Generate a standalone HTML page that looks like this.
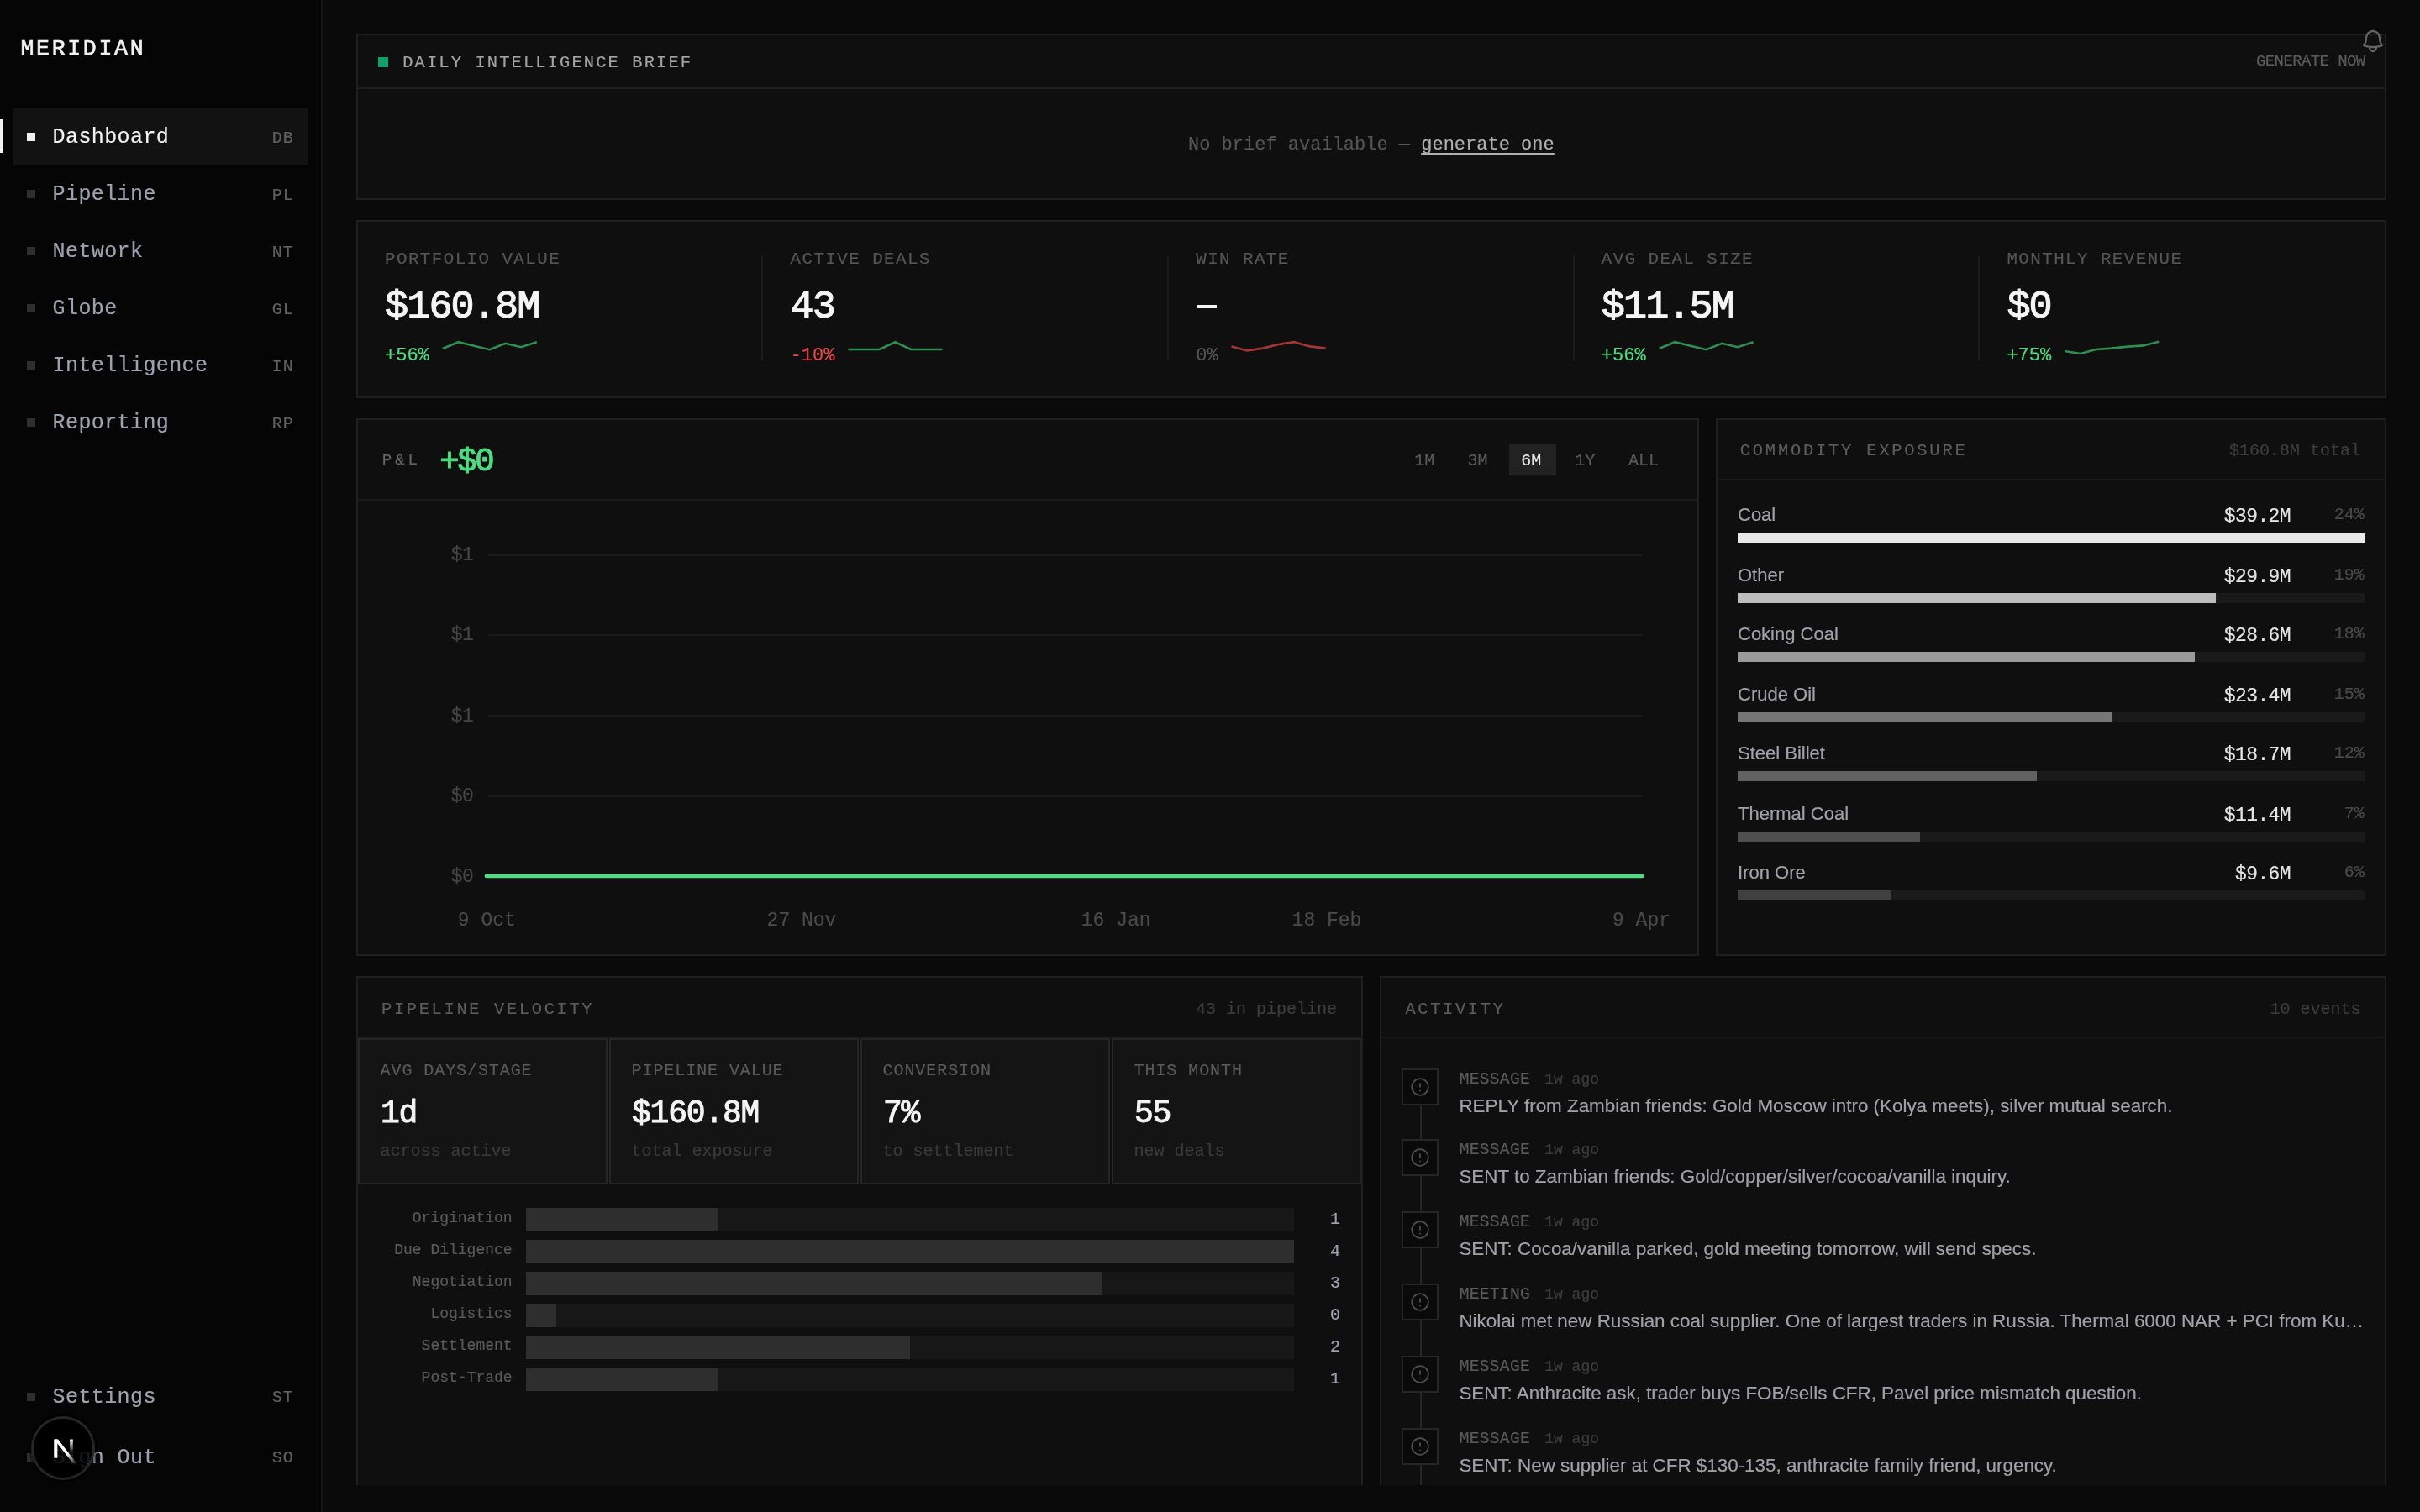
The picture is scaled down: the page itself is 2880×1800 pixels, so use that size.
<!DOCTYPE html>
<html><head><meta charset="utf-8"><title>Meridian</title>
<style>
html,body{margin:0;padding:0;background:#0a0a0a;overflow:hidden;-webkit-font-smoothing:antialiased}
body{width:1440px;height:900px;position:relative}
@media (min-width:2000px){html{zoom:2}}
.t{position:absolute;white-space:pre;-webkit-text-stroke:0.1px currentColor}
.r{position:absolute}
.clip{position:absolute;left:0;top:0;width:1440px;height:884px;overflow:hidden}
</style></head><body><div id="w" style="position:absolute;left:0;top:0;width:1440px;height:900px;will-change:transform;background:#0a0a0a">
<div class="r" style="left:0px;top:0px;width:191px;height:900px;background:#050505;"></div>
<div class="r" style="left:191px;top:0px;width:1px;height:900px;background:#151515;"></div>
<div class="t" style="top:21.58px;font:400 13.3px/15.96px 'Liberation Mono', monospace;color:#f2f2f2;letter-spacing:1.33px;left:12.20px;-webkit-text-stroke:0.3px #f2f2f2;">MERIDIAN</div>
<div class="r" style="left:0px;top:71px;width:2px;height:20px;background:#f0f0f0;"></div>
<div class="r" style="left:8px;top:64px;width:175px;height:34px;background:#121212;"></div>
<div class="r" style="left:16px;top:79px;width:5px;height:5px;background:#f0f0f0;"></div>
<div class="t" style="top:74.47px;font:400 12.5px/15.0px 'Liberation Mono', monospace;color:#f2f2f2;letter-spacing:0.2px;left:31.30px;">Dashboard</div>
<div class="t" style="top:76.64px;font:400 10px/12.0px 'Liberation Mono', monospace;color:#606060;letter-spacing:0.5px;right:1265.10px;text-align:right;">DB</div>
<div class="r" style="left:16px;top:113px;width:5px;height:5px;background:#2e2e2e;"></div>
<div class="t" style="top:108.47px;font:400 12.5px/15.0px 'Liberation Mono', monospace;color:#9ca3af;letter-spacing:0.2px;left:31.30px;">Pipeline</div>
<div class="t" style="top:110.64px;font:400 10px/12.0px 'Liberation Mono', monospace;color:#606060;letter-spacing:0.5px;right:1265.10px;text-align:right;">PL</div>
<div class="r" style="left:16px;top:147px;width:5px;height:5px;background:#2e2e2e;"></div>
<div class="t" style="top:142.47px;font:400 12.5px/15.0px 'Liberation Mono', monospace;color:#9ca3af;letter-spacing:0.2px;left:31.30px;">Network</div>
<div class="t" style="top:144.64px;font:400 10px/12.0px 'Liberation Mono', monospace;color:#606060;letter-spacing:0.5px;right:1265.10px;text-align:right;">NT</div>
<div class="r" style="left:16px;top:181px;width:5px;height:5px;background:#2e2e2e;"></div>
<div class="t" style="top:176.47px;font:400 12.5px/15.0px 'Liberation Mono', monospace;color:#9ca3af;letter-spacing:0.2px;left:31.30px;">Globe</div>
<div class="t" style="top:178.64px;font:400 10px/12.0px 'Liberation Mono', monospace;color:#606060;letter-spacing:0.5px;right:1265.10px;text-align:right;">GL</div>
<div class="r" style="left:16px;top:215px;width:5px;height:5px;background:#2e2e2e;"></div>
<div class="t" style="top:210.47px;font:400 12.5px/15.0px 'Liberation Mono', monospace;color:#9ca3af;letter-spacing:0.2px;left:31.30px;">Intelligence</div>
<div class="t" style="top:212.64px;font:400 10px/12.0px 'Liberation Mono', monospace;color:#606060;letter-spacing:0.5px;right:1265.10px;text-align:right;">IN</div>
<div class="r" style="left:16px;top:249px;width:5px;height:5px;background:#2e2e2e;"></div>
<div class="t" style="top:244.47px;font:400 12.5px/15.0px 'Liberation Mono', monospace;color:#9ca3af;letter-spacing:0.2px;left:31.30px;">Reporting</div>
<div class="t" style="top:246.64px;font:400 10px/12.0px 'Liberation Mono', monospace;color:#606060;letter-spacing:0.5px;right:1265.10px;text-align:right;">RP</div>
<div class="r" style="left:16px;top:829px;width:5px;height:5px;background:#2e2e2e;"></div>
<div class="t" style="top:824.67px;font:400 12.5px/15.0px 'Liberation Mono', monospace;color:#9ca3af;letter-spacing:0.2px;left:31.30px;">Settings</div>
<div class="t" style="top:826.24px;font:400 10px/12.0px 'Liberation Mono', monospace;color:#606060;letter-spacing:0.5px;right:1265.10px;text-align:right;">ST</div>
<div class="r" style="left:16px;top:865px;width:5px;height:5px;background:#2e2e2e;"></div>
<div class="t" style="top:860.57px;font:400 12.5px/15.0px 'Liberation Mono', monospace;color:#9ca3af;letter-spacing:0.2px;left:31.30px;">Sign Out</div>
<div class="t" style="top:862.14px;font:400 10px/12.0px 'Liberation Mono', monospace;color:#606060;letter-spacing:0.5px;right:1265.10px;text-align:right;">SO</div>
<div class="r" style="left:192px;top:0px;width:1248px;height:900px;background:#0a0a0a;"></div>
<div class="clip">
<div class="r" style="left:212px;top:20px;width:1208px;height:99px;background:#0f0f0f;box-shadow:inset 0 0 0 1px #1f1f1f;"></div>
<div class="r" style="left:213px;top:52px;width:1206px;height:1px;background:#1f1f1f;"></div>
<div class="r" style="left:225px;top:34px;width:6px;height:6px;background:#12a06d;"></div>
<div class="t" style="top:31.52px;font:400 10.2px/12.24px 'Liberation Mono', monospace;color:#a3a3a3;letter-spacing:1.07px;left:239.60px;">DAILY INTELLIGENCE BRIEF</div>
<div class="t" style="top:30.87px;font:400 9.5px/11.4px 'Liberation Mono', monospace;color:#5c5c5c;letter-spacing:-0.3px;right:32.70px;text-align:right;">GENERATE NOW</div>
<div class="t" style="top:79.77px;font:400 11px/13.2px 'Liberation Mono', monospace;color:#555555;left:707.00px;">No brief available — <span style="color:#b0b0b0;text-decoration:underline;text-underline-offset:2px;text-decoration-skip-ink:none">generate one</span></div>
<div class="r" style="left:212px;top:131px;width:1208px;height:106px;background:#0f0f0f;box-shadow:inset 0 0 0 1px #1f1f1f;"></div>
<div class="t" style="top:148.39px;font:400 10.4px/12.48px 'Liberation Mono', monospace;color:#555555;letter-spacing:0.73px;left:229.00px;">PORTFOLIO VALUE</div>
<div class="t" style="top:169.03px;font:400 23.4px/28.08px 'Liberation Mono', monospace;color:#f5f5f5;letter-spacing:-0.94px;left:229.00px;-webkit-text-stroke:0.55px #f5f5f5;">$160.8M</div>
<div class="t" style="top:205.27px;font:400 11px/13.2px 'Liberation Mono', monospace;color:#4ade80;left:229.00px;">+56%</div>
<svg class="r" style="left:0;top:0" width="1440" height="240"><polyline points="263.40,207.50 272.73,203.60 282.07,205.85 291.40,208.10 300.73,204.40 310.07,206.60 319.40,203.60" fill="none" stroke="#2f8f52" stroke-width="1.3" stroke-linejoin="miter"/></svg>
<div class="r" style="left:453.2px;top:152px;width:1px;height:63px;background:#1c1c1c;"></div>
<div class="t" style="top:148.39px;font:400 10.4px/12.48px 'Liberation Mono', monospace;color:#555555;letter-spacing:0.73px;left:470.30px;">ACTIVE DEALS</div>
<div class="t" style="top:169.03px;font:400 23.4px/28.08px 'Liberation Mono', monospace;color:#f5f5f5;letter-spacing:-0.94px;left:470.30px;-webkit-text-stroke:0.55px #f5f5f5;">43</div>
<div class="t" style="top:205.27px;font:400 11px/13.2px 'Liberation Mono', monospace;color:#ef4444;left:470.30px;">-10%</div>
<svg class="r" style="left:0;top:0" width="1440" height="240"><polyline points="504.70,208.00 514.03,208.00 523.37,208.00 532.70,203.60 542.03,208.00 551.37,208.00 560.70,208.00" fill="none" stroke="#2f8f52" stroke-width="1.3" stroke-linejoin="miter"/></svg>
<div class="r" style="left:694.5px;top:152px;width:1px;height:63px;background:#1c1c1c;"></div>
<div class="t" style="top:148.39px;font:400 10.4px/12.48px 'Liberation Mono', monospace;color:#555555;letter-spacing:0.73px;left:711.60px;">WIN RATE</div>
<div class="r" style="left:711.9px;top:181.55px;width:12.15px;height:2.2px;background:#f5f5f5;"></div>
<div class="t" style="top:205.27px;font:400 11px/13.2px 'Liberation Mono', monospace;color:#555555;left:711.60px;">0%</div>
<svg class="r" style="left:0;top:0" width="1440" height="240"><polyline points="732.80,206.30 742.13,208.70 751.47,207.30 760.80,205.00 770.13,203.60 779.47,206.20 788.80,207.30" fill="none" stroke="#a33636" stroke-width="1.3" stroke-linejoin="miter"/></svg>
<div class="r" style="left:935.8px;top:152px;width:1px;height:63px;background:#1c1c1c;"></div>
<div class="t" style="top:148.39px;font:400 10.4px/12.48px 'Liberation Mono', monospace;color:#555555;letter-spacing:0.73px;left:952.90px;">AVG DEAL SIZE</div>
<div class="t" style="top:169.03px;font:400 23.4px/28.08px 'Liberation Mono', monospace;color:#f5f5f5;letter-spacing:-0.94px;left:952.90px;-webkit-text-stroke:0.55px #f5f5f5;">$11.5M</div>
<div class="t" style="top:205.27px;font:400 11px/13.2px 'Liberation Mono', monospace;color:#4ade80;left:952.90px;">+56%</div>
<svg class="r" style="left:0;top:0" width="1440" height="240"><polyline points="987.30,207.50 996.63,203.60 1005.97,205.85 1015.30,208.10 1024.63,204.40 1033.97,206.60 1043.30,203.60" fill="none" stroke="#2f8f52" stroke-width="1.3" stroke-linejoin="miter"/></svg>
<div class="r" style="left:1177.1px;top:152px;width:1px;height:63px;background:#1c1c1c;"></div>
<div class="t" style="top:148.39px;font:400 10.4px/12.48px 'Liberation Mono', monospace;color:#555555;letter-spacing:0.73px;left:1194.20px;">MONTHLY REVENUE</div>
<div class="t" style="top:169.03px;font:400 23.4px/28.08px 'Liberation Mono', monospace;color:#f5f5f5;letter-spacing:-0.94px;left:1194.20px;-webkit-text-stroke:0.55px #f5f5f5;">$0</div>
<div class="t" style="top:205.27px;font:400 11px/13.2px 'Liberation Mono', monospace;color:#4ade80;left:1194.20px;">+75%</div>
<svg class="r" style="left:0;top:0" width="1440" height="240"><polyline points="1228.60,209.00 1237.93,210.50 1247.27,208.00 1256.60,207.30 1265.93,206.30 1275.27,205.70 1284.60,203.40" fill="none" stroke="#2f8f52" stroke-width="1.3" stroke-linejoin="miter"/></svg>
<div class="r" style="left:212px;top:249px;width:799px;height:320px;background:#0f0f0f;box-shadow:inset 0 0 0 1px #1f1f1f;"></div>
<div class="r" style="left:213px;top:297px;width:797px;height:1px;background:#1a1a1a;"></div>
<div class="t" style="top:268.57px;font:400 9.5px/11.4px 'Liberation Mono', monospace;color:#666666;letter-spacing:2.0px;left:227.40px;">P&amp;L</div>
<div class="t" style="top:263.51px;font:400 19.5px/23.4px 'Liberation Mono', monospace;color:#4ade80;letter-spacing:-1.2px;left:261.60px;-webkit-text-stroke:0.5px #4ade80;">+$0</div>
<div class="r" style="left:898px;top:264px;width:28px;height:19.1px;background:#222222;"></div>
<div class="t" style="top:268.64px;font:400 10px/12.0px 'Liberation Mono', monospace;color:#5a5a5a;left:841.60px;">1M</div>
<div class="t" style="top:268.64px;font:400 10px/12.0px 'Liberation Mono', monospace;color:#5a5a5a;left:873.30px;">3M</div>
<div class="t" style="top:268.64px;font:400 10px/12.0px 'Liberation Mono', monospace;color:#e8e8e8;left:905.10px;">6M</div>
<div class="t" style="top:268.64px;font:400 10px/12.0px 'Liberation Mono', monospace;color:#5a5a5a;left:937.10px;">1Y</div>
<div class="t" style="top:268.64px;font:400 10px/12.0px 'Liberation Mono', monospace;color:#5a5a5a;left:969.00px;">ALL</div>
<div class="r" style="left:290px;top:329.8px;width:687px;height:1px;background:#1a1a1a;"></div>
<div class="t" style="top:324.04px;font:400 11.5px/13.8px 'Liberation Mono', monospace;color:#454545;letter-spacing:-0.35px;right:1158.50px;text-align:right;">$1</div>
<div class="r" style="left:290px;top:377.4px;width:687px;height:1px;background:#1a1a1a;"></div>
<div class="t" style="top:371.64px;font:400 11.5px/13.8px 'Liberation Mono', monospace;color:#454545;letter-spacing:-0.35px;right:1158.50px;text-align:right;">$1</div>
<div class="r" style="left:290px;top:425.6px;width:687px;height:1px;background:#1a1a1a;"></div>
<div class="t" style="top:419.84px;font:400 11.5px/13.8px 'Liberation Mono', monospace;color:#454545;letter-spacing:-0.35px;right:1158.50px;text-align:right;">$1</div>
<div class="r" style="left:290px;top:473.5px;width:687px;height:1px;background:#1a1a1a;"></div>
<div class="t" style="top:467.74px;font:400 11.5px/13.8px 'Liberation Mono', monospace;color:#454545;letter-spacing:-0.35px;right:1158.50px;text-align:right;">$0</div>
<div class="r" style="left:290px;top:521.3px;width:687px;height:1px;background:#1a1a1a;"></div>
<div class="t" style="top:515.54px;font:400 11.5px/13.8px 'Liberation Mono', monospace;color:#454545;letter-spacing:-0.35px;right:1158.50px;text-align:right;">$0</div>
<div class="t" style="top:541.34px;font:400 11.5px/13.8px 'Liberation Mono', monospace;color:#4a4a4a;left:272.40px;">9 Oct</div>
<div class="t" style="top:541.34px;font:400 11.5px/13.8px 'Liberation Mono', monospace;color:#4a4a4a;left:456.30px;">27 Nov</div>
<div class="t" style="top:541.34px;font:400 11.5px/13.8px 'Liberation Mono', monospace;color:#4a4a4a;left:643.40px;">16 Jan</div>
<div class="t" style="top:541.34px;font:400 11.5px/13.8px 'Liberation Mono', monospace;color:#4a4a4a;left:768.80px;">18 Feb</div>
<div class="t" style="top:541.34px;font:400 11.5px/13.8px 'Liberation Mono', monospace;color:#4a4a4a;left:959.50px;">9 Apr</div>
<svg class="r" style="left:0;top:0" width="1440" height="600"><line x1="289.4" y1="521.5" x2="977.2" y2="521.5" stroke="#4ade80" stroke-width="2.2" stroke-linecap="round"/></svg>
<div class="r" style="left:1021px;top:249px;width:399px;height:320px;background:#0f0f0f;box-shadow:inset 0 0 0 1px #1f1f1f;"></div>
<div class="r" style="left:1022px;top:285px;width:397px;height:1px;background:#1a1a1a;"></div>
<div class="t" style="top:262.67px;font:400 10.2px/12.24px 'Liberation Mono', monospace;color:#5c5c5c;letter-spacing:1.4px;left:1035.40px;">COMMODITY EXPOSURE</div>
<div class="t" style="top:262.54px;font:400 10px/12.0px 'Liberation Mono', monospace;color:#3d3d3d;right:35.50px;text-align:right;">$160.8M total</div>
<div class="t" style="top:299.79px;font:400 11.0px/13.2px 'Liberation Sans', sans-serif;color:#a1a1aa;left:1034.00px;">Coal</div>
<div class="t" style="top:300.84px;font:400 11.5px/13.8px 'Liberation Mono', monospace;color:#e5e5e5;letter-spacing:-0.3px;right:77.00px;text-align:right;">$39.2M</div>
<div class="t" style="top:300.54px;font:400 10px/12.0px 'Liberation Mono', monospace;color:#4a4a4a;right:33.15px;text-align:right;">24%</div>
<div class="r" style="left:1034px;top:317px;width:373px;height:6px;background:#1a1a1a;"></div>
<div class="r" style="left:1034px;top:317px;width:373.0px;height:6px;background:#e8e8e8;"></div>
<div class="t" style="top:335.79px;font:400 11.0px/13.2px 'Liberation Sans', sans-serif;color:#a1a1aa;left:1034.00px;">Other</div>
<div class="t" style="top:336.84px;font:400 11.5px/13.8px 'Liberation Mono', monospace;color:#e5e5e5;letter-spacing:-0.3px;right:77.00px;text-align:right;">$29.9M</div>
<div class="t" style="top:336.54px;font:400 10px/12.0px 'Liberation Mono', monospace;color:#4a4a4a;right:33.15px;text-align:right;">19%</div>
<div class="r" style="left:1034px;top:353px;width:373px;height:6px;background:#1a1a1a;"></div>
<div class="r" style="left:1034px;top:353px;width:284.51px;height:6px;background:#bdbdbd;"></div>
<div class="t" style="top:370.79px;font:400 11.0px/13.2px 'Liberation Sans', sans-serif;color:#a1a1aa;left:1034.00px;">Coking Coal</div>
<div class="t" style="top:371.84px;font:400 11.5px/13.8px 'Liberation Mono', monospace;color:#e5e5e5;letter-spacing:-0.3px;right:77.00px;text-align:right;">$28.6M</div>
<div class="t" style="top:371.54px;font:400 10px/12.0px 'Liberation Mono', monospace;color:#4a4a4a;right:33.15px;text-align:right;">18%</div>
<div class="r" style="left:1034px;top:388px;width:373px;height:6px;background:#1a1a1a;"></div>
<div class="r" style="left:1034px;top:388px;width:272.14px;height:6px;background:#9a9a9a;"></div>
<div class="t" style="top:406.79px;font:400 11.0px/13.2px 'Liberation Sans', sans-serif;color:#a1a1aa;left:1034.00px;">Crude Oil</div>
<div class="t" style="top:407.84px;font:400 11.5px/13.8px 'Liberation Mono', monospace;color:#e5e5e5;letter-spacing:-0.3px;right:77.00px;text-align:right;">$23.4M</div>
<div class="t" style="top:407.54px;font:400 10px/12.0px 'Liberation Mono', monospace;color:#4a4a4a;right:33.15px;text-align:right;">15%</div>
<div class="r" style="left:1034px;top:424px;width:373px;height:6px;background:#1a1a1a;"></div>
<div class="r" style="left:1034px;top:424px;width:222.66px;height:6px;background:#777777;"></div>
<div class="t" style="top:441.79px;font:400 11.0px/13.2px 'Liberation Sans', sans-serif;color:#a1a1aa;left:1034.00px;">Steel Billet</div>
<div class="t" style="top:442.84px;font:400 11.5px/13.8px 'Liberation Mono', monospace;color:#e5e5e5;letter-spacing:-0.3px;right:77.00px;text-align:right;">$18.7M</div>
<div class="t" style="top:442.54px;font:400 10px/12.0px 'Liberation Mono', monospace;color:#4a4a4a;right:33.15px;text-align:right;">12%</div>
<div class="r" style="left:1034px;top:459px;width:373px;height:6px;background:#1a1a1a;"></div>
<div class="r" style="left:1034px;top:459px;width:177.94px;height:6px;background:#626262;"></div>
<div class="t" style="top:477.79px;font:400 11.0px/13.2px 'Liberation Sans', sans-serif;color:#a1a1aa;left:1034.00px;">Thermal Coal</div>
<div class="t" style="top:478.84px;font:400 11.5px/13.8px 'Liberation Mono', monospace;color:#e5e5e5;letter-spacing:-0.3px;right:77.00px;text-align:right;">$11.4M</div>
<div class="t" style="top:478.54px;font:400 10px/12.0px 'Liberation Mono', monospace;color:#4a4a4a;right:33.15px;text-align:right;">7%</div>
<div class="r" style="left:1034px;top:495px;width:373px;height:6px;background:#1a1a1a;"></div>
<div class="r" style="left:1034px;top:495px;width:108.47px;height:6px;background:#4f4f4f;"></div>
<div class="t" style="top:512.79px;font:400 11.0px/13.2px 'Liberation Sans', sans-serif;color:#a1a1aa;left:1034.00px;">Iron Ore</div>
<div class="t" style="top:513.84px;font:400 11.5px/13.8px 'Liberation Mono', monospace;color:#e5e5e5;letter-spacing:-0.3px;right:77.00px;text-align:right;">$9.6M</div>
<div class="t" style="top:513.54px;font:400 10px/12.0px 'Liberation Mono', monospace;color:#4a4a4a;right:33.15px;text-align:right;">6%</div>
<div class="r" style="left:1034px;top:530px;width:373px;height:6px;background:#1a1a1a;"></div>
<div class="r" style="left:1034px;top:530px;width:91.35px;height:6px;background:#404040;"></div>
<div class="r" style="left:212px;top:581px;width:599px;height:400px;background:#0f0f0f;box-shadow:inset 0 0 0 1px #1f1f1f;"></div>
<div class="r" style="left:213px;top:617px;width:597px;height:1px;background:#1c1c1c;"></div>
<div class="t" style="top:594.77px;font:400 10.2px/12.24px 'Liberation Mono', monospace;color:#5c5c5c;letter-spacing:1.33px;left:227.00px;">PIPELINE VELOCITY</div>
<div class="t" style="top:594.84px;font:400 10px/12.0px 'Liberation Mono', monospace;color:#3d3d3d;right:644.50px;text-align:right;">43 in pipeline</div>
<div class="r" style="left:213.0px;top:618px;width:148.5px;height:87px;background:#141414;box-shadow:inset 0 0 0 1px #262626;"></div>
<div class="t" style="top:631.54px;font:400 10px/12.0px 'Liberation Mono', monospace;color:#5a5a5a;letter-spacing:0.46px;left:226.30px;">AVG DAYS/STAGE</div>
<div class="t" style="top:651.74px;font:400 19px/22.8px 'Liberation Mono', monospace;color:#f5f5f5;letter-spacing:-0.6px;left:226.50px;-webkit-text-stroke:0.5px #f5f5f5;">1d</div>
<div class="t" style="top:679.34px;font:400 10px/12.0px 'Liberation Mono', monospace;color:#3a3a3a;left:226.30px;">across active</div>
<div class="r" style="left:362.5px;top:618px;width:148.5px;height:87px;background:#141414;box-shadow:inset 0 0 0 1px #262626;"></div>
<div class="t" style="top:631.54px;font:400 10px/12.0px 'Liberation Mono', monospace;color:#5a5a5a;letter-spacing:0.46px;left:375.80px;">PIPELINE VALUE</div>
<div class="t" style="top:651.74px;font:400 19px/22.8px 'Liberation Mono', monospace;color:#f5f5f5;letter-spacing:-0.6px;left:376.00px;-webkit-text-stroke:0.5px #f5f5f5;">$160.8M</div>
<div class="t" style="top:679.34px;font:400 10px/12.0px 'Liberation Mono', monospace;color:#3a3a3a;left:375.80px;">total exposure</div>
<div class="r" style="left:512.0px;top:618px;width:148.5px;height:87px;background:#141414;box-shadow:inset 0 0 0 1px #262626;"></div>
<div class="t" style="top:631.54px;font:400 10px/12.0px 'Liberation Mono', monospace;color:#5a5a5a;letter-spacing:0.46px;left:525.30px;">CONVERSION</div>
<div class="t" style="top:651.74px;font:400 19px/22.8px 'Liberation Mono', monospace;color:#f5f5f5;letter-spacing:-0.6px;left:525.50px;-webkit-text-stroke:0.5px #f5f5f5;">7%</div>
<div class="t" style="top:679.34px;font:400 10px/12.0px 'Liberation Mono', monospace;color:#3a3a3a;left:525.30px;">to settlement</div>
<div class="r" style="left:661.5px;top:618px;width:148.5px;height:87px;background:#141414;box-shadow:inset 0 0 0 1px #262626;"></div>
<div class="t" style="top:631.54px;font:400 10px/12.0px 'Liberation Mono', monospace;color:#5a5a5a;letter-spacing:0.46px;left:674.80px;">THIS MONTH</div>
<div class="t" style="top:651.74px;font:400 19px/22.8px 'Liberation Mono', monospace;color:#f5f5f5;letter-spacing:-0.6px;left:675.00px;-webkit-text-stroke:0.5px #f5f5f5;">55</div>
<div class="t" style="top:679.34px;font:400 10px/12.0px 'Liberation Mono', monospace;color:#3a3a3a;left:674.80px;">new deals</div>
<div class="t" style="top:720.21px;font:400 9px/10.8px 'Liberation Mono', monospace;color:#5a5a5a;right:1135.20px;text-align:right;">Origination</div>
<div class="r" style="left:313px;top:719.1px;width:457px;height:14px;background:#171717;"></div>
<div class="r" style="left:313px;top:719.1px;width:114.25px;height:14px;background:#2e2e2e;"></div>
<div class="t" style="top:720.09px;font:400 10px/12.0px 'Liberation Mono', monospace;color:#9ca3af;right:642.50px;text-align:right;">1</div>
<div class="t" style="top:739.21px;font:400 9px/10.8px 'Liberation Mono', monospace;color:#5a5a5a;right:1135.20px;text-align:right;">Due Diligence</div>
<div class="r" style="left:313px;top:738.1px;width:457px;height:14px;background:#171717;"></div>
<div class="r" style="left:313px;top:738.1px;width:457.0px;height:14px;background:#2e2e2e;"></div>
<div class="t" style="top:739.09px;font:400 10px/12.0px 'Liberation Mono', monospace;color:#9ca3af;right:642.50px;text-align:right;">4</div>
<div class="t" style="top:758.21px;font:400 9px/10.8px 'Liberation Mono', monospace;color:#5a5a5a;right:1135.20px;text-align:right;">Negotiation</div>
<div class="r" style="left:313px;top:757.1px;width:457px;height:14px;background:#171717;"></div>
<div class="r" style="left:313px;top:757.1px;width:342.75px;height:14px;background:#2e2e2e;"></div>
<div class="t" style="top:758.09px;font:400 10px/12.0px 'Liberation Mono', monospace;color:#9ca3af;right:642.50px;text-align:right;">3</div>
<div class="t" style="top:777.21px;font:400 9px/10.8px 'Liberation Mono', monospace;color:#5a5a5a;right:1135.20px;text-align:right;">Logistics</div>
<div class="r" style="left:313px;top:776.1px;width:457px;height:14px;background:#171717;"></div>
<div class="r" style="left:313px;top:776.1px;width:18.15px;height:14px;background:#2e2e2e;"></div>
<div class="t" style="top:777.09px;font:400 10px/12.0px 'Liberation Mono', monospace;color:#9ca3af;right:642.50px;text-align:right;">0</div>
<div class="t" style="top:796.21px;font:400 9px/10.8px 'Liberation Mono', monospace;color:#5a5a5a;right:1135.20px;text-align:right;">Settlement</div>
<div class="r" style="left:313px;top:795.1px;width:457px;height:14px;background:#171717;"></div>
<div class="r" style="left:313px;top:795.1px;width:228.5px;height:14px;background:#2e2e2e;"></div>
<div class="t" style="top:796.09px;font:400 10px/12.0px 'Liberation Mono', monospace;color:#9ca3af;right:642.50px;text-align:right;">2</div>
<div class="t" style="top:815.21px;font:400 9px/10.8px 'Liberation Mono', monospace;color:#5a5a5a;right:1135.20px;text-align:right;">Post-Trade</div>
<div class="r" style="left:313px;top:814.1px;width:457px;height:14px;background:#171717;"></div>
<div class="r" style="left:313px;top:814.1px;width:114.25px;height:14px;background:#2e2e2e;"></div>
<div class="t" style="top:815.09px;font:400 10px/12.0px 'Liberation Mono', monospace;color:#9ca3af;right:642.50px;text-align:right;">1</div>
<div class="r" style="left:821px;top:581px;width:599px;height:400px;background:#0f0f0f;box-shadow:inset 0 0 0 1px #1f1f1f;"></div>
<div class="r" style="left:822px;top:617px;width:597px;height:1px;background:#1a1a1a;"></div>
<div class="t" style="top:594.77px;font:400 10.2px/12.24px 'Liberation Mono', monospace;color:#5c5c5c;letter-spacing:1.33px;left:836.20px;">ACTIVITY</div>
<div class="t" style="top:594.84px;font:400 10px/12.0px 'Liberation Mono', monospace;color:#3d3d3d;right:35.20px;text-align:right;">10 events</div>
<div class="r" style="left:844.8px;top:657.9px;width:1px;height:20.1px;background:#262626;"></div>
<div class="r" style="left:833.9px;top:635.9px;width:22px;height:22px;background:#0a0a0a;box-shadow:inset 0 0 0 1px #262626;"></div>
<svg class="r" style="left:833.9px;top:635.90px" width="22" height="22" viewBox="0 0 22 22"><circle cx="11" cy="11" r="4.9" fill="none" stroke="#4d4d4d" stroke-width="0.85"/><line x1="11" y1="8.7" x2="11" y2="11.3" stroke="#4d4d4d" stroke-width="0.9"/><line x1="11" y1="12.9" x2="11" y2="13.6" stroke="#4d4d4d" stroke-width="0.9"/></svg>
<div class="t" style="top:636.86px;font:400 9.8px/11.76px 'Liberation Mono', monospace;color:#5a5a5a;letter-spacing:0.13px;left:868.40px;">MESSAGE</div>
<div class="t" style="top:637.56px;font:400 9px/10.8px 'Liberation Mono', monospace;color:#3d3d3d;left:919.10px;">1w ago</div>
<div class="t" style="top:651.85px;font:400 11.2px/13.44px 'Liberation Sans', sans-serif;color:#a1a1aa;left:868.20px;width:542px;overflow:hidden;text-overflow:ellipsis;white-space:nowrap;">REPLY from Zambian friends: Gold Moscow intro (Kolya meets), silver mutual search.</div>
<div class="r" style="left:844.8px;top:700.0px;width:1px;height:20.9px;background:#262626;"></div>
<div class="r" style="left:833.9px;top:678.0px;width:22px;height:22px;background:#0a0a0a;box-shadow:inset 0 0 0 1px #262626;"></div>
<svg class="r" style="left:833.9px;top:678.00px" width="22" height="22" viewBox="0 0 22 22"><circle cx="11" cy="11" r="4.9" fill="none" stroke="#4d4d4d" stroke-width="0.85"/><line x1="11" y1="8.7" x2="11" y2="11.3" stroke="#4d4d4d" stroke-width="0.9"/><line x1="11" y1="12.9" x2="11" y2="13.6" stroke="#4d4d4d" stroke-width="0.9"/></svg>
<div class="t" style="top:678.96px;font:400 9.8px/11.76px 'Liberation Mono', monospace;color:#5a5a5a;letter-spacing:0.13px;left:868.40px;">MESSAGE</div>
<div class="t" style="top:679.66px;font:400 9px/10.8px 'Liberation Mono', monospace;color:#3d3d3d;left:919.10px;">1w ago</div>
<div class="t" style="top:693.95px;font:400 11.2px/13.44px 'Liberation Sans', sans-serif;color:#a1a1aa;left:868.20px;width:542px;overflow:hidden;text-overflow:ellipsis;white-space:nowrap;">SENT to Zambian friends: Gold/copper/silver/cocoa/vanilla inquiry.</div>
<div class="r" style="left:844.8px;top:742.9px;width:1px;height:21.0px;background:#262626;"></div>
<div class="r" style="left:833.9px;top:720.9px;width:22px;height:22px;background:#0a0a0a;box-shadow:inset 0 0 0 1px #262626;"></div>
<svg class="r" style="left:833.9px;top:720.90px" width="22" height="22" viewBox="0 0 22 22"><circle cx="11" cy="11" r="4.9" fill="none" stroke="#4d4d4d" stroke-width="0.85"/><line x1="11" y1="8.7" x2="11" y2="11.3" stroke="#4d4d4d" stroke-width="0.9"/><line x1="11" y1="12.9" x2="11" y2="13.6" stroke="#4d4d4d" stroke-width="0.9"/></svg>
<div class="t" style="top:721.86px;font:400 9.8px/11.76px 'Liberation Mono', monospace;color:#5a5a5a;letter-spacing:0.13px;left:868.40px;">MESSAGE</div>
<div class="t" style="top:722.56px;font:400 9px/10.8px 'Liberation Mono', monospace;color:#3d3d3d;left:919.10px;">1w ago</div>
<div class="t" style="top:736.85px;font:400 11.2px/13.44px 'Liberation Sans', sans-serif;color:#a1a1aa;left:868.20px;width:542px;overflow:hidden;text-overflow:ellipsis;white-space:nowrap;">SENT: Cocoa/vanilla parked, gold meeting tomorrow, will send specs.</div>
<div class="r" style="left:844.8px;top:785.9px;width:1px;height:21.0px;background:#262626;"></div>
<div class="r" style="left:833.9px;top:763.9px;width:22px;height:22px;background:#0a0a0a;box-shadow:inset 0 0 0 1px #262626;"></div>
<svg class="r" style="left:833.9px;top:763.90px" width="22" height="22" viewBox="0 0 22 22"><circle cx="11" cy="11" r="4.9" fill="none" stroke="#4d4d4d" stroke-width="0.85"/><line x1="11" y1="8.7" x2="11" y2="11.3" stroke="#4d4d4d" stroke-width="0.9"/><line x1="11" y1="12.9" x2="11" y2="13.6" stroke="#4d4d4d" stroke-width="0.9"/></svg>
<div class="t" style="top:764.86px;font:400 9.8px/11.76px 'Liberation Mono', monospace;color:#5a5a5a;letter-spacing:0.13px;left:868.40px;">MEETING</div>
<div class="t" style="top:765.56px;font:400 9px/10.8px 'Liberation Mono', monospace;color:#3d3d3d;left:919.10px;">1w ago</div>
<div class="t" style="top:779.85px;font:400 11.2px/13.44px 'Liberation Sans', sans-serif;color:#a1a1aa;left:868.20px;width:542px;overflow:hidden;text-overflow:ellipsis;white-space:nowrap;">Nikolai met new Russian coal supplier. One of largest traders in Russia. Thermal 6000 NAR + PCI from Kuzbass region, long-term offtake discussed.</div>
<div class="r" style="left:844.8px;top:828.9px;width:1px;height:21.0px;background:#262626;"></div>
<div class="r" style="left:833.9px;top:806.9px;width:22px;height:22px;background:#0a0a0a;box-shadow:inset 0 0 0 1px #262626;"></div>
<svg class="r" style="left:833.9px;top:806.90px" width="22" height="22" viewBox="0 0 22 22"><circle cx="11" cy="11" r="4.9" fill="none" stroke="#4d4d4d" stroke-width="0.85"/><line x1="11" y1="8.7" x2="11" y2="11.3" stroke="#4d4d4d" stroke-width="0.9"/><line x1="11" y1="12.9" x2="11" y2="13.6" stroke="#4d4d4d" stroke-width="0.9"/></svg>
<div class="t" style="top:807.86px;font:400 9.8px/11.76px 'Liberation Mono', monospace;color:#5a5a5a;letter-spacing:0.13px;left:868.40px;">MESSAGE</div>
<div class="t" style="top:808.56px;font:400 9px/10.8px 'Liberation Mono', monospace;color:#3d3d3d;left:919.10px;">1w ago</div>
<div class="t" style="top:822.85px;font:400 11.2px/13.44px 'Liberation Sans', sans-serif;color:#a1a1aa;left:868.20px;width:542px;overflow:hidden;text-overflow:ellipsis;white-space:nowrap;">SENT: Anthracite ask, trader buys FOB/sells CFR, Pavel price mismatch question.</div>
<div class="r" style="left:844.8px;top:871.9px;width:1px;height:21.0px;background:#262626;"></div>
<div class="r" style="left:833.9px;top:849.9px;width:22px;height:22px;background:#0a0a0a;box-shadow:inset 0 0 0 1px #262626;"></div>
<svg class="r" style="left:833.9px;top:849.90px" width="22" height="22" viewBox="0 0 22 22"><circle cx="11" cy="11" r="4.9" fill="none" stroke="#4d4d4d" stroke-width="0.85"/><line x1="11" y1="8.7" x2="11" y2="11.3" stroke="#4d4d4d" stroke-width="0.9"/><line x1="11" y1="12.9" x2="11" y2="13.6" stroke="#4d4d4d" stroke-width="0.9"/></svg>
<div class="t" style="top:850.86px;font:400 9.8px/11.76px 'Liberation Mono', monospace;color:#5a5a5a;letter-spacing:0.13px;left:868.40px;">MESSAGE</div>
<div class="t" style="top:851.56px;font:400 9px/10.8px 'Liberation Mono', monospace;color:#3d3d3d;left:919.10px;">1w ago</div>
<div class="t" style="top:865.85px;font:400 11.2px/13.44px 'Liberation Sans', sans-serif;color:#a1a1aa;left:868.20px;width:542px;overflow:hidden;text-overflow:ellipsis;white-space:nowrap;">SENT: New supplier at CFR $130-135, anthracite family friend, urgency.</div>
<div class="r" style="left:844.8px;top:914.9px;width:1px;height:30px;background:#262626;"></div>
<div class="r" style="left:833.9px;top:892.9px;width:22px;height:22px;background:#0a0a0a;box-shadow:inset 0 0 0 1px #262626;"></div>
<svg class="r" style="left:833.9px;top:892.90px" width="22" height="22" viewBox="0 0 22 22"><circle cx="11" cy="11" r="4.9" fill="none" stroke="#4d4d4d" stroke-width="0.85"/><line x1="11" y1="8.7" x2="11" y2="11.3" stroke="#4d4d4d" stroke-width="0.9"/><line x1="11" y1="12.9" x2="11" y2="13.6" stroke="#4d4d4d" stroke-width="0.9"/></svg>
<div class="t" style="top:893.86px;font:400 9.8px/11.76px 'Liberation Mono', monospace;color:#5a5a5a;letter-spacing:0.13px;left:868.40px;">MESSAGE</div>
<div class="t" style="top:894.56px;font:400 9px/10.8px 'Liberation Mono', monospace;color:#3d3d3d;left:919.10px;">1w ago</div>
<div class="t" style="top:908.85px;font:400 11.2px/13.44px 'Liberation Sans', sans-serif;color:#a1a1aa;left:868.20px;width:542px;overflow:hidden;text-overflow:ellipsis;white-space:nowrap;">SENT: Follow-up on coking coal specs.</div>
</div>
<svg class="r" style="left:1404px;top:16.3px" width="16" height="16" viewBox="0 0 24 24" fill="none" stroke="#646464" stroke-width="1.7" stroke-linecap="round" stroke-linejoin="round"><path d="M14.857 17.082a23.848 23.848 0 0 0 5.454-1.31A8.967 8.967 0 0 1 18 9.75V9A6 6 0 0 0 6 9v.75a8.967 8.967 0 0 1-2.312 6.022c1.733.64 3.56 1.085 5.455 1.31m5.714 0a24.255 24.255 0 0 1-5.714 0m5.714 0a3 3 0 1 1-5.714 0"/></svg>
<div class="r" style="left:20.05px;top:844.5px;width:35px;height:35px;border-radius:50%;background:rgba(0,0,0,0.85);box-shadow:0 0 0 1.5px #262626,0 0 0 3px rgba(0,0,0,.35)"></div>
<svg class="r" style="left:24.1px;top:848.25px" width="27.5" height="27.5" viewBox="0 0 180 180"><defs><linearGradient id="g1" x1="105" y1="110" x2="138" y2="150" gradientUnits="userSpaceOnUse"><stop stop-color="#fff"/><stop offset="1" stop-color="#fff" stop-opacity="0"/></linearGradient><linearGradient id="g2" x1="121" y1="54" x2="120.799" y2="106.875" gradientUnits="userSpaceOnUse"><stop stop-color="#fff"/><stop offset="1" stop-color="#fff" stop-opacity="0"/></linearGradient></defs><path d="M149.508 157.52L69.142 54H54V125.97H66.1136V69.3836L139.999 164.845C143.333 162.614 146.509 160.165 149.508 157.52Z" fill="url(#g1)"/><rect x="54" y="54" width="12.11" height="71.97" fill="#fff"/><rect x="115" y="54" width="12" height="72" fill="url(#g2)"/></svg>
</div></body></html>
